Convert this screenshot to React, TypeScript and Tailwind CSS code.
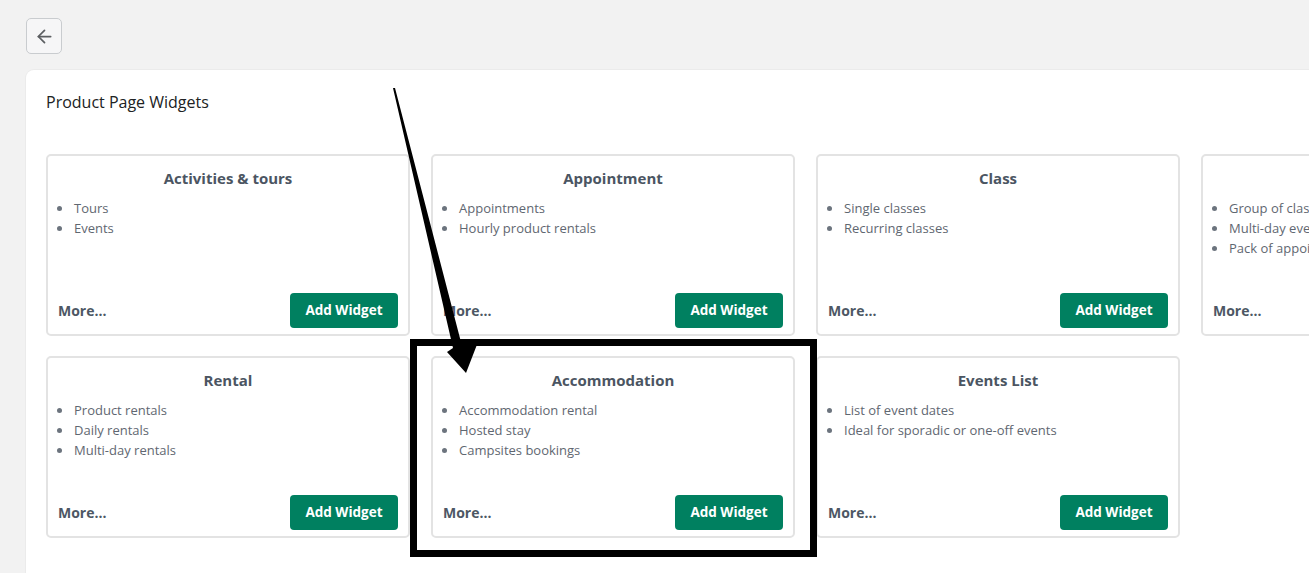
import React from "react";
import { ArrowLeft } from "lucide-react";

type W = { title: string; items: string[] };

const row1: W[] = [
  { title: "Activities & tours", items: ["Tours", "Events"] },
  { title: "Appointment", items: ["Appointments", "Hourly product rentals"] },
  { title: "Class", items: ["Single classes", "Recurring classes"] },
  { title: "Package", items: ["Group of classes", "Multi-day events", "Pack of appointments"] },
];
const row2: W[] = [
  { title: "Rental", items: ["Product rentals", "Daily rentals", "Multi-day rentals"] },
  { title: "Accommodation", items: ["Accommodation rental", "Hosted stay", "Campsites bookings"] },
  { title: "Events List", items: ["List of event dates", "Ideal for sporadic or one-off events"] },
];

function Card({ w }: { w: W }) {
  return (
    <div className="h-[182px] border-2 border-[#e3e3e3] rounded-[5px] bg-white flex flex-col px-[10px] pt-[11px] pb-[6px]">
      <div className="text-center text-[15px] leading-[22px] font-bold text-[#4b5562]">{w.title}</div>
      <ul className="list-disc pl-[15px] mt-[9px] text-[13px] leading-[20px] text-[#5f6771] marker:text-[#6c747e]">
        {w.items.map((i) => (
          <li key={i} className="whitespace-nowrap pl-[1px]">{i}</li>
        ))}
      </ul>
      <div className="mt-auto flex items-center justify-between">
        <span className="text-[14px] font-bold text-[#4d5764]">More...</span>
        <button className="h-[35px] w-[108px] rounded-[4px] bg-[#008060] text-white text-[13.5px] font-bold">
          Add Widget
        </button>
      </div>
    </div>
  );
}

export default function App() {
  return (
    <div
      className="relative w-[1309px] h-[573px] overflow-hidden bg-[#f2f2f2]"
      style={{ fontFamily: '"Open Sans", "Noto Sans", sans-serif' }}
    >
      <div className="pl-[26px] pt-[18px]">
        <button className="w-[36px] h-[36px] rounded-[5px] border border-[#c9cccf] bg-[#f6f6f7] flex items-center justify-center">
          <ArrowLeft size={21} strokeWidth={2} color="#5c5f62" />
        </button>
      </div>
      <div className="ml-[26px] mt-[16px] w-[1400px] h-[520px] bg-white rounded-tl-[8px] pl-[20px] pt-[22px] shadow-[0_0_0_1px_#ebebeb]">
        <div className="text-[16px] leading-[20px] text-[#202223]">Product Page Widgets</div>
        <div className="mt-[42px] grid grid-cols-[364px_364px_364px_364px] gap-x-[21px] gap-y-[20px]">
          {row1.map((w) => (
            <Card key={w.title} w={w} />
          ))}
          {row2.map((w) => (
            <Card key={w.title} w={w} />
          ))}
        </div>
      </div>
      <svg className="absolute inset-0 pointer-events-none" width="1309" height="573" viewBox="0 0 1309 573">
        <polygon points="393,88 395,88 462,346 478,342 466,373 447,352 453,348" fill="#000" />
        <rect x="413.5" y="342.5" width="400" height="211" fill="none" stroke="#000" strokeWidth="7" />
      </svg>
    </div>
  );
}
